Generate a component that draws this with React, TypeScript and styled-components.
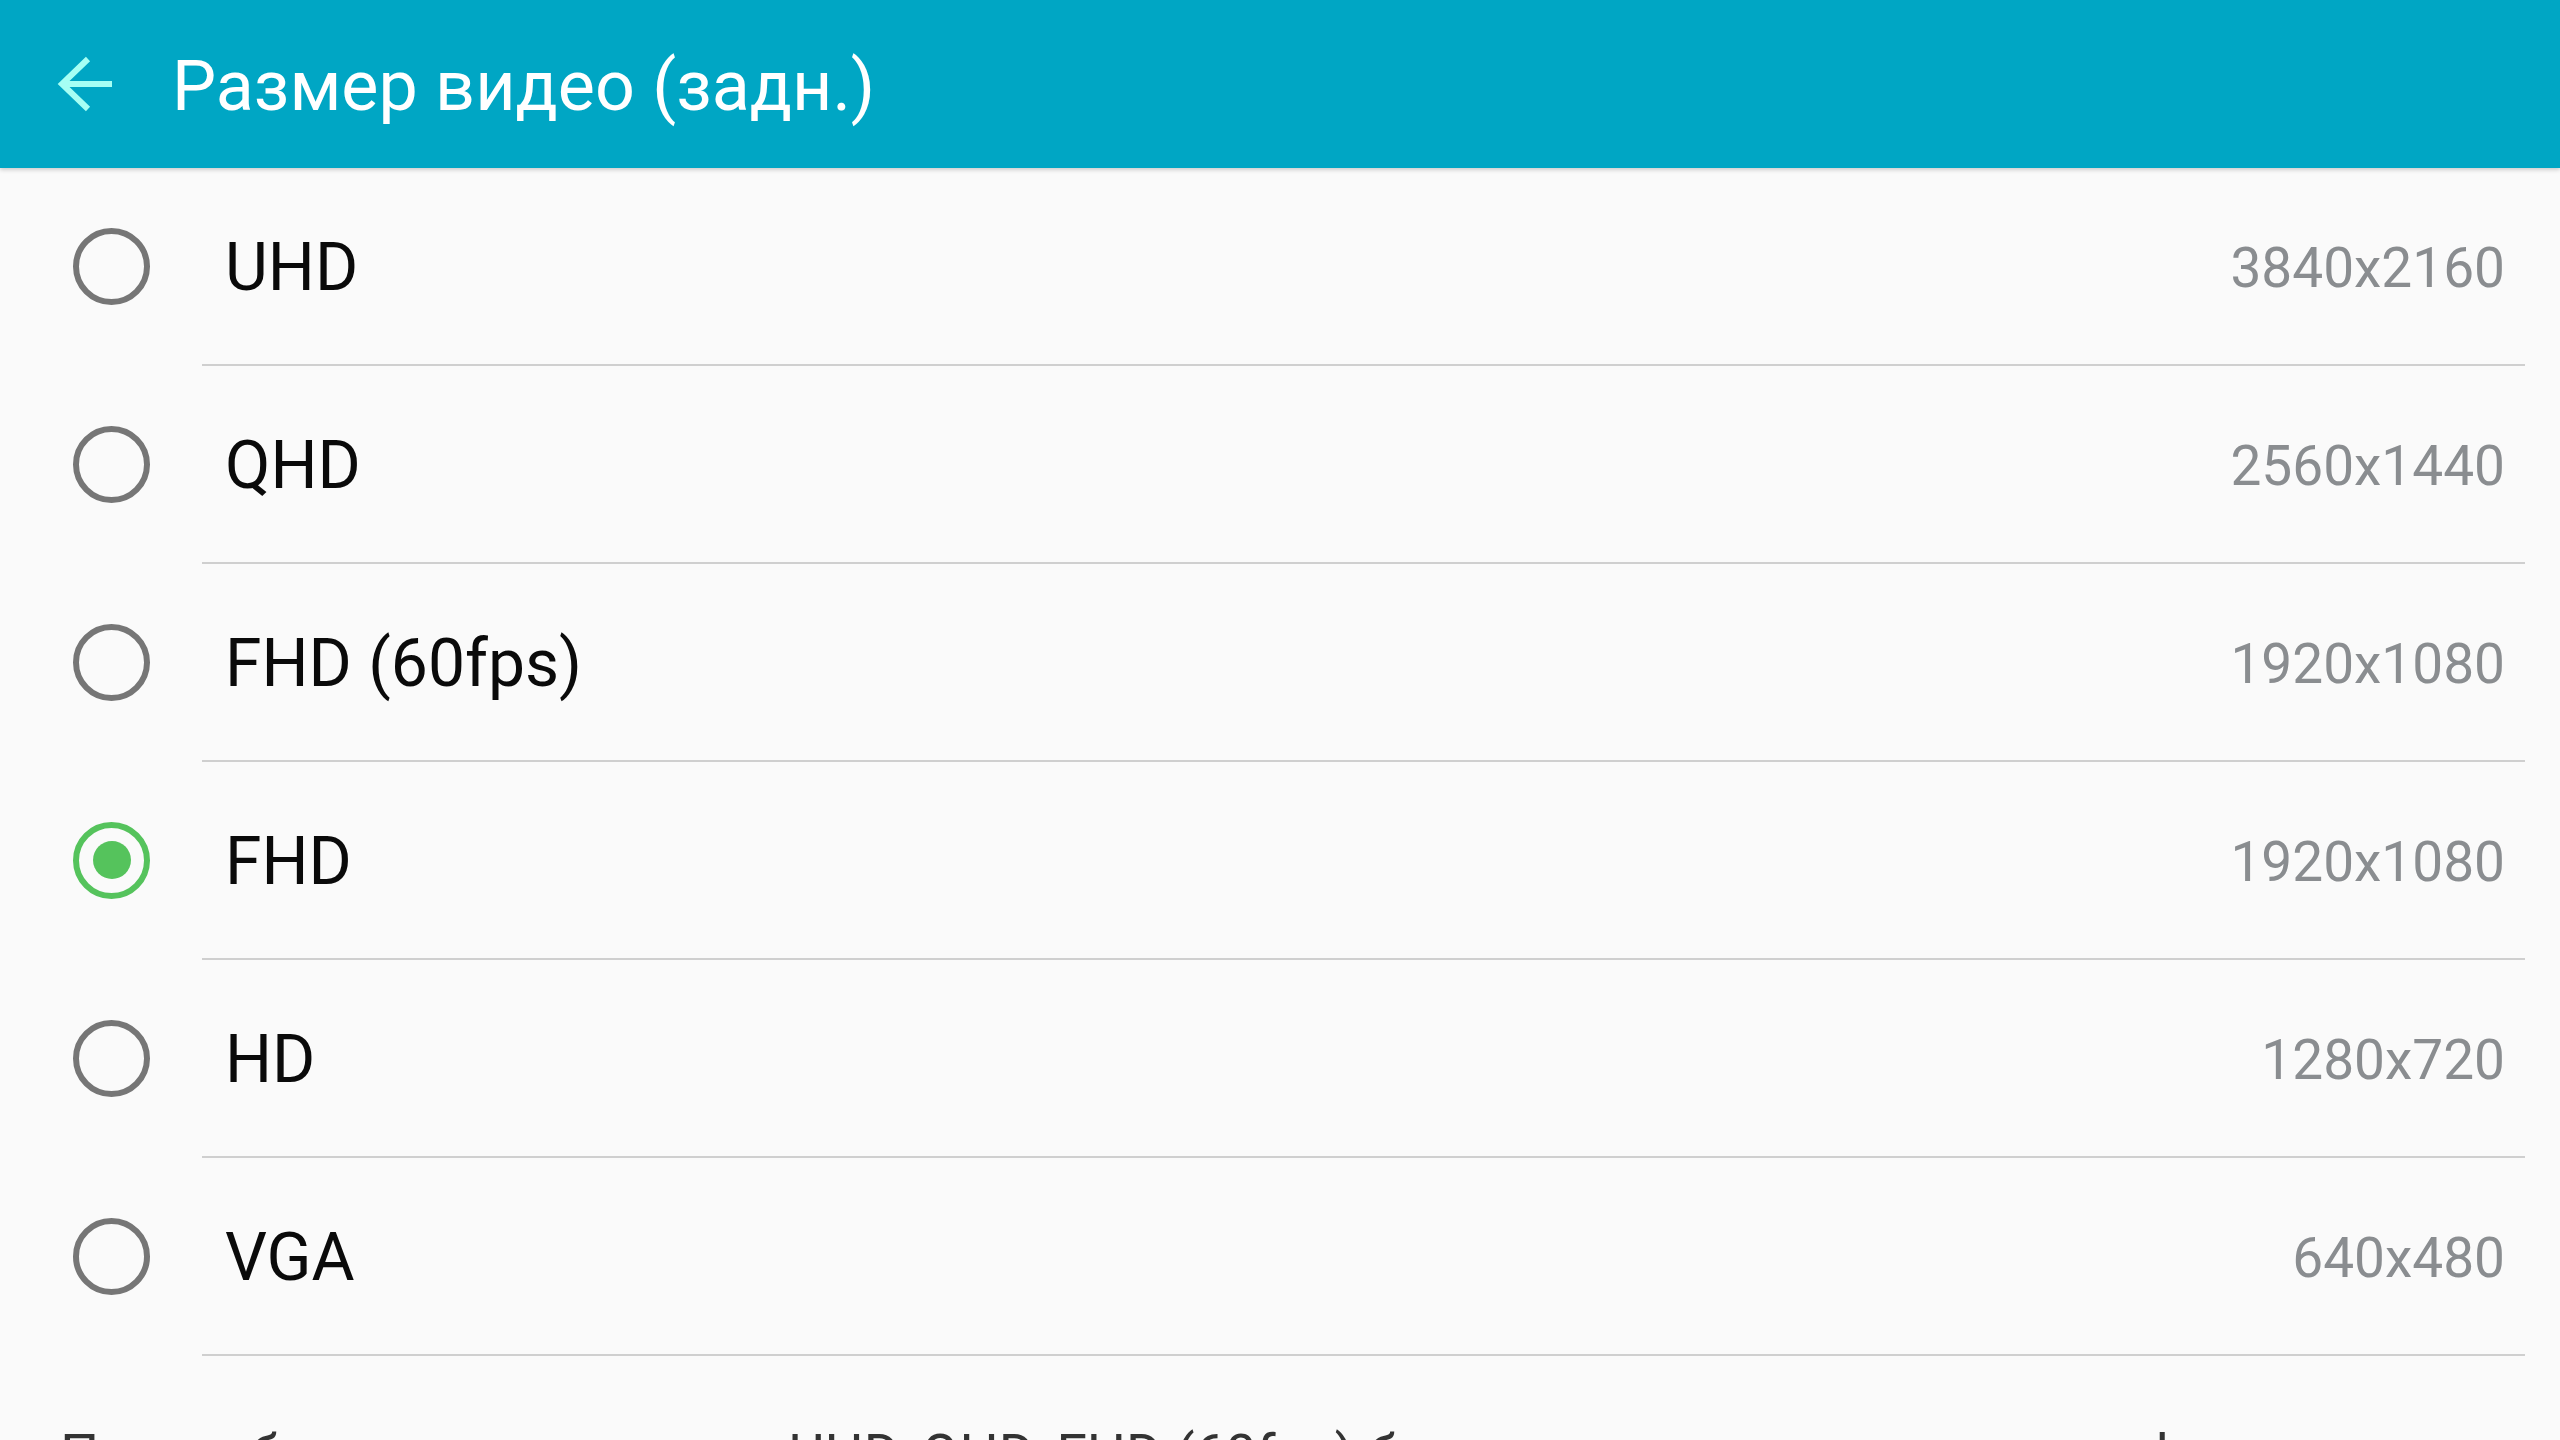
import styled, { createGlobalStyle } from 'styled-components';

const GlobalStyle = createGlobalStyle`
  html, body {
    margin: 0;
    padding: 0;
    background: #fafafa;
    font-family: Roboto, 'Noto Sans', sans-serif;
    overflow: hidden;
  }
`;

const sizes = [
  { name: 'UHD', value: '3840x2160' },
  { name: 'QHD', value: '2560x1440' },
  { name: 'FHD (60fps)', value: '1920x1080' },
  { name: 'FHD', value: '1920x1080', checked: true },
  { name: 'HD', value: '1280x720' },
  { name: 'VGA', value: '640x480' },
];

const BackArrow = () => (
  <svg width="60" height="60" viewBox="55 54 60 60" fill="none">
    <path d="M88 59 L62 84 L88 109 M62 84 H112" stroke="#a6fff4" strokeWidth="6" />
  </svg>
);

const App = () => {
  return (
    <Page>
      <GlobalStyle />
      <Header>
        <BackButton>
          <BackArrow />
        </BackButton>
        <Title>Размер видео (задн.)</Title>
      </Header>
      <List>
        {sizes.map((s) => (
          <Row key={s.name}>
            <Radio $checked={!!s.checked} />
            <Body>
              <Label>{s.name}</Label>
              <Value>{s.value}</Value>
            </Body>
          </Row>
        ))}
      </List>
      <Note>
        При выборе размера видео UHD, QHD, FHD (60fps) будут недоступны некоторые функции.
      </Note>
    </Page>
  );
};

export default App;

const Page = styled.div`
  width: 2560px;
  height: 1440px;
  overflow: hidden;
  background: #fafafa;
`;

const Header = styled.header`
  display: flex;
  align-items: center;
  height: 168px;
  padding-left: 55px;
  background: #00a6c4;
  box-shadow: 0 2px 4px rgba(0, 0, 0, 0.18);
  position: relative;
  z-index: 1;
`;

const BackButton = styled.div`
  display: flex;
  width: 60px;
  height: 60px;
`;

const Title = styled.h1`
  margin: 0 0 0 57px;
  font-size: 70px;
  font-weight: 400;
  color: #ffffff;
  line-height: 1;
  padding-top: 4px;
`;

const List = styled.div`
  display: flex;
  flex-direction: column;
`;

const Row = styled.div`
  display: flex;
  align-items: center;
  height: 198px;
  padding-left: 73px;
`;

const Radio = styled.span<{ $checked: boolean }>`
  display: flex;
  align-items: center;
  justify-content: center;
  box-sizing: border-box;
  flex: none;
  width: 77px;
  height: 77px;
  border-radius: 50%;
  border: 6px solid ${(p) => (p.$checked ? '#55c35c' : '#767676')};
  margin-top: -2px;

  &::after {
    content: '';
    display: ${(p) => (p.$checked ? 'block' : 'none')};
    width: 38px;
    height: 38px;
    border-radius: 50%;
    background: #55c35c;
  }
`;

const Body = styled.div`
  flex: 1;
  align-self: stretch;
  display: flex;
  align-items: center;
  justify-content: space-between;
  margin-left: 52px;
  margin-right: 35px;
  padding: 0 20px 0 23px;
  border-bottom: 2px solid #cfcfcf;
`;

const Label = styled.span`
  font-size: 66px;
  color: #0a0a0a;
  line-height: 1;
  padding-top: 4px;
`;

const Value = styled.span`
  font-size: 55px;
  color: #8a8d90;
  line-height: 1;
  padding-top: 4px;
`;

const Note = styled.p`
  margin: 0;
  padding: 64px 60px 0;
  font-size: 55px;
  color: #333333;
  line-height: 1.3;
`;
